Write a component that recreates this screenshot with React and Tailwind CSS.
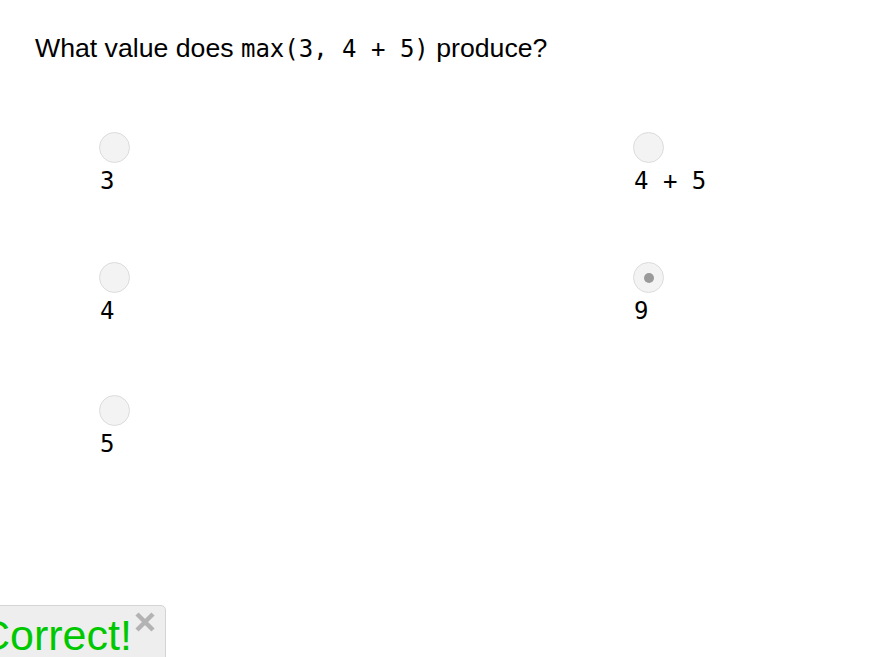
import React, { useState } from 'react';

const options = [
  { id: 'a', label: '3' },
  { id: 'b', label: '4 + 5' },
  { id: 'c', label: '4' },
  { id: 'd', label: '9' },
  { id: 'e', label: '5' },
];

const Radio = ({ checked, onClick }) => (
  <button
    onClick={onClick}
    className="w-[31px] h-[31px] rounded-full border border-[#dcdcdc] bg-[#f3f3f3] flex items-center justify-center"
  >
    {checked && <span className="w-[10px] h-[10px] rounded-full bg-[#9a9a9a]" />}
  </button>
);

const App = () => {
  const [picked, setPicked] = useState('d');
  const [showResult, setShowResult] = useState(true);

  return (
    <div className="w-[879px] h-[657px] bg-white relative overflow-hidden font-['Liberation_Sans',Arial,sans-serif]">
      <div className="pt-[32px] pl-[35px] text-[26.67px] leading-[32px] text-black">
        What value does{' '}
        <code className="font-['DejaVu_Sans_Mono',monospace] text-[24px]">max(3, 4 + 5)</code>{' '}
        produce?
      </div>

      <div className="grid grid-cols-[534px_1fr] grid-rows-[130px_133px_auto] pl-[99px] pt-[67px]">
        {options.map(opt => (
          <div key={opt.id} className="flex flex-col items-start">
            <Radio checked={picked === opt.id} onClick={() => setPicked(opt.id)} />
            <span className="mt-[4px] pl-[1px] font-['DejaVu_Sans_Mono',monospace] text-[24px] leading-[28px] whitespace-pre text-black">
              {opt.label}
            </span>
          </div>
        ))}
      </div>

      {showResult && (
        <div className="absolute left-[-20px] top-[605px] w-[186px] h-[70px] bg-[#eeeeee] border border-[#d4d4d4] rounded-[5px]">
          <span className="absolute left-[-2px] top-[8px] text-[43px] leading-none text-[#00c800] whitespace-nowrap">Correct!</span>
          <button
            onClick={() => setShowResult(false)}
            className="absolute left-[153px] top-[5px] w-[22px] h-[22px]"
          >
            <svg viewBox="0 0 22 22" className="w-[22px] h-[22px]">
              <path d="M3 3 L19 19 M19 3 L3 19" stroke="#b3b3b3" strokeWidth="4.5" />
            </svg>
          </button>
        </div>
      )}
    </div>
  );
};

export default App;
